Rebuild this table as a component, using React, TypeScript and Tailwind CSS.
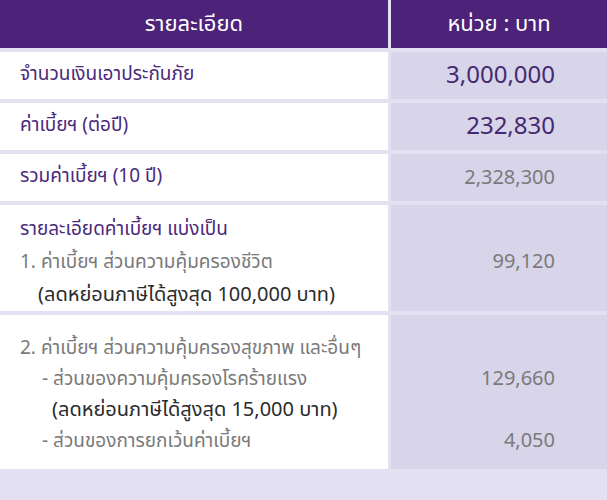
const rows = [
  { label: 'จำนวนเงินเอาประกันภัย', value: '3,000,000', strong: true },
  { label: 'ค่าเบี้ยฯ (ต่อปี)', value: '232,830', strong: true },
  { label: 'รวมค่าเบี้ยฯ (10 ปี)', value: '2,328,300', strong: false },
];

const font = { fontFamily: '"Noto Sans Thai", "Noto Sans", "DejaVu Sans", sans-serif' };

export default function App() {
  return (
    <div className="w-[607px] h-[500px] bg-[#e3e0f1] overflow-hidden" style={font}>
      <div className="grid grid-cols-[388px_1fr] gap-x-[3px] gap-y-[4px] bg-[#e3e0f1]">
        {/* header */}
        <div className="h-[48px] bg-[#4d2279] text-white text-[22px] flex items-center justify-center">
          รายละเอียด
        </div>
        <div className="h-[48px] bg-[#4d2279] text-white text-[22px] flex items-center justify-center">
          หน่วย : บาท
        </div>

        {rows.map((r) => (
          <Row key={r.label} {...r} />
        ))}

        {/* breakdown 1 */}
        <div className="h-[106px] bg-white pl-[20px] pt-[8px] text-[19px] leading-[33px]">
          <div className="text-[#4a2a7c]">รายละเอียดค่าเบี้ยฯ แบ่งเป็น</div>
          <div className="text-[#7a7a7a]">1. ค่าเบี้ยฯ ส่วนความคุ้มครองชีวิต</div>
          <div className="pl-[18px] text-[20px] text-[#2b2b2b]">(ลดหย่อนภาษีได้สูงสุด 100,000 บาท)</div>
        </div>
        <div className="h-[106px] bg-[#d8d4ea] pr-[52px] pt-[41px] text-right text-[20px] leading-[33px] text-[#7a7a7a]">
          99,120
        </div>

        {/* breakdown 2 */}
        <div className="h-[154px] bg-white pl-[20px] pt-[18px] text-[19px] leading-[31px] text-[#7a7a7a]">
          <div>2. ค่าเบี้ยฯ ส่วนความคุ้มครองสุขภาพ และอื่นๆ</div>
          <div className="pl-[22px]">- ส่วนของความคุ้มครองโรคร้ายแรง</div>
          <div className="pl-[32px] text-[20px] text-[#2b2b2b]">(ลดหย่อนภาษีได้สูงสุด 15,000 บาท)</div>
          <div className="pl-[22px]">- ส่วนของการยกเว้นค่าเบี้ยฯ</div>
        </div>
        <div className="h-[154px] bg-[#d8d4ea] pr-[52px] pt-[49px] text-right text-[20px] leading-[31px] text-[#7a7a7a]">
          <div>129,660</div>
          <div className="h-[31px]" />
          <div>4,050</div>
        </div>
      </div>
    </div>
  );
}

function Row({ label, value, strong }: { label: string; value: string; strong: boolean }) {
  return (
    <>
      <div className="h-[47px] bg-white pl-[20px] flex items-center text-[19px] text-[#4a2a7c]">{label}</div>
      <div
        className={
          strong
            ? 'h-[47px] bg-[#d8d4ea] pr-[52px] flex items-center justify-end text-[24px] text-[#432a6e]'
            : 'h-[47px] bg-[#d8d4ea] pr-[52px] flex items-center justify-end text-[20px] text-[#7a7a7a]'
        }
      >
        {value}
      </div>
    </>
  );
}
